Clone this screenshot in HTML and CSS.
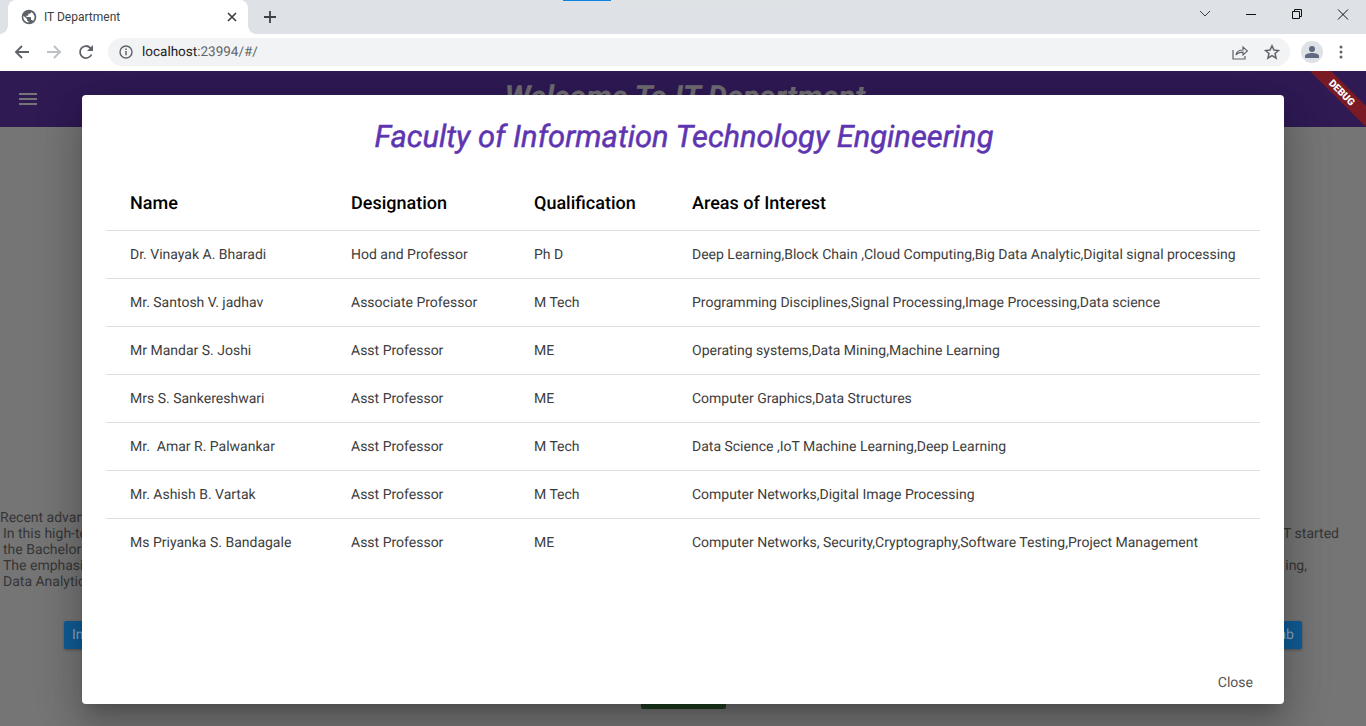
FILE: index.html
```html
<!DOCTYPE html>
<html lang="en">
<head>
    <meta charset="UTF-8">
    <title>IT Department</title>
    <link rel="stylesheet" href="styles.css">
</head>
<body>
    <div class="browser">
        <div class="tabstrip">
            <div class="tab">
                <svg class="tab-globe" width="16" height="16" viewBox="0 0 24 24"><path fill="#5f6368" d="M12 1a11 11 0 1 0 0 22 11 11 0 0 0 0-22zM11 20.500A8.500 8.500 0 0 1 3.700 10.200L9 15v1c0 1.100.9 2 2 2v2.500zm7-2.600c-.3-.8-1-1.400-1.900-1.400h-1.100v-3.500c0-.6-.4-1-1-1H8V10h2c.6 0 1-.4 1-1V7h2c1.100 0 2-.9 2-2v-.6a8.500 8.500 0 0 1 3 13.500z"/></svg>
                <span class="tab-title">IT Department</span>
                <svg class="tab-close" width="10" height="10" viewBox="0 0 10 10"><path d="M1 1l8 8M9 1l-8 8" stroke="#3c4043" stroke-width="1.700"/></svg>
            </div>
            <svg class="tab-new" width="14" height="14" viewBox="0 0 14 14"><path d="M7 1v12M1 7h12" stroke="#3c4043" stroke-width="1.800"/></svg>
            <div class="loading-bar"><span></span></div>
            <div class="win-controls">
                <svg width="46" height="30" viewBox="0 0 46 30"><path d="M18 11l5 5 5-5" fill="none" stroke="#3c4043" stroke-width="1"/></svg>
                <svg width="46" height="30" viewBox="0 0 46 30"><path d="M18 14.500h10" stroke="#111" stroke-width="1"/></svg>
                <svg width="46" height="30" viewBox="0 0 46 30"><path d="M18.500 11.500h7v7h-7zM20.500 11.500v-2h7v7h-2" fill="none" stroke="#111" stroke-width="1"/></svg>
                <svg width="46" height="30" viewBox="0 0 46 30"><path d="M18 9.500l10 10M28 9.500l-10 10" stroke="#111" stroke-width="1"/></svg>
            </div>
        </div>
        <div class="toolbar">
            <svg class="nav-icon" width="16" height="16" viewBox="0 0 16 16"><path d="M15 8H2M8 2L2 8l6 6" fill="none" stroke="#5f6368" stroke-width="1.900"/></svg>
            <svg class="nav-icon" width="16" height="16" viewBox="0 0 16 16"><path d="M1 8h13M8 2l6 6-6 6" fill="none" stroke="#bdc1c6" stroke-width="1.900"/></svg>
            <svg class="nav-icon" width="16" height="16" viewBox="0 0 16 16"><path d="M13.500 10.500A6 6 0 1 1 12.300 3.800L14 5.500" fill="none" stroke="#5f6368" stroke-width="1.800"/><path d="M15 1v6H9z" fill="#5f6368"/></svg>
            <div class="omnibox">
                <svg width="14" height="14" viewBox="0 0 14 14"><circle cx="7" cy="7" r="6" fill="none" stroke="#5f6368" stroke-width="1.400"/><path d="M7 6v4.200M7 3.600v1.400" stroke="#5f6368" stroke-width="1.500"/></svg>
                <span class="url"><b>localhost</b>:23994/#/</span>
                <svg class="omni-share" width="16" height="16" viewBox="0 0 16 16"><path d="M1 6v9h12v-3" fill="none" stroke="#5f6368" stroke-width="1.200"/><path d="M4 11c.5-3.500 3-5 7-5V3l4.500 4-4.500 4V8.200c-3 0-5.500.8-7 2.800z" fill="none" stroke="#5f6368" stroke-width="1.200"/></svg>
                <svg class="omni-star" width="16" height="16" viewBox="0 0 16 16"><path d="M8 1.800l1.900 4.300 4.600.4-3.500 3 1.100 4.600L8 11.700l-4.100 2.400L5 9.500l-3.500-3 4.600-.4z" fill="none" stroke="#5f6368" stroke-width="1.500"/></svg>
            </div>
            <div class="avatar">
                <svg width="14" height="12" viewBox="0 0 14 12"><circle cx="7" cy="3" r="3" fill="#5f6a80"/><path d="M0 12V10c0-2 3.500-3 7-3s7 1 7 3v2z" fill="#5f6a80"/></svg>
            </div>
            <svg class="menu-dots" width="4" height="14" viewBox="0 0 4 14"><circle cx="2" cy="2" r="1.500" fill="#5f6368"/><circle cx="2" cy="7" r="1.500" fill="#5f6368"/><circle cx="2" cy="12" r="1.500" fill="#5f6368"/></svg>
        </div>
    </div>

    <div class="app">
        <div class="appbar">
            <svg class="hamburger" width="18" height="12" viewBox="0 0 18 12"><path d="M0 1h18M0 6h18M0 11h18" stroke="#fff" stroke-width="2"/></svg>
            <h1 class="appbar-title">Welcome To IT Department</h1>
        </div>
        <div class="page">
            <div class="intro">
                <div class="intro-line"><span>Recent advances</span></div>
                <div class="intro-line indent"><span>In this high-tech</span><span class="end-a">T started</span></div>
                <div class="intro-line indent"><span>the Bachelor of</span></div>
                <div class="intro-line indent"><span>The emphasis</span><span class="end-b">ing,</span></div>
                <div class="intro-line indent"><span>Data Analytics</span></div>
            </div>
            <div class="page-buttons">
                <span class="lab-btn">Infrastructure</span>
                <span class="lab-btn">Lab</span>
            </div>
            <div class="green-row"><span class="green-btn"></span></div>
        </div>

        <div class="scrim"></div>

        <div class="dialog">
            <h2 class="dialog-title">Faculty of Information Technology Engineering</h2>
            <table class="faculty">
                <thead>
                    <tr><th class="c-name">Name</th><th class="c-desig">Designation</th><th class="c-qual">Qualification</th><th>Areas of Interest</th></tr>
                </thead>
                <tbody>
                    <tr><td>Dr. Vinayak A. Bharadi</td><td>Hod and Professor</td><td>Ph D</td><td>Deep Learning,Block Chain ,Cloud Computing,Big Data Analytic,Digital signal processing</td></tr>
                    <tr><td>Mr. Santosh V. jadhav</td><td>Associate Professor</td><td>M Tech</td><td>Programming Disciplines,Signal Processing,Image Processing,Data science</td></tr>
                    <tr><td>Mr Mandar S. Joshi</td><td>Asst Professor</td><td>ME</td><td>Operating systems,Data Mining,Machine Learning</td></tr>
                    <tr><td>Mrs S. Sankereshwari</td><td>Asst Professor</td><td>ME</td><td>Computer Graphics,Data Structures</td></tr>
                    <tr><td>Mr.&nbsp; Amar R. Palwankar</td><td>Asst Professor</td><td>M Tech</td><td>Data Science ,IoT Machine Learning,Deep Learning</td></tr>
                    <tr><td>Mr. Ashish B. Vartak</td><td>Asst Professor</td><td>M Tech</td><td>Computer Networks,Digital Image Processing</td></tr>
                    <tr><td>Ms Priyanka S. Bandagale</td><td>Asst Professor</td><td>ME</td><td>Computer Networks, Security,Cryptography,Software Testing,Project Management</td></tr>
                </tbody>
            </table>
            <div class="dialog-actions"><span class="close-btn">Close</span></div>
        </div>

        <div class="debug-corner"><div class="debug-ribbon">DEBUG</div></div>
    </div>
</body>
</html>
```

FILE: styles.css
```css
html, body {
    margin: 0;
    padding: 0;
    height: 100%;
    overflow: hidden;
}

body {
    font-family: 'Roboto', sans-serif;
    display: flex;
    flex-direction: column;
    background: #fff;
}

/* Browser chrome */
.browser {
    flex: none;
    height: 71px;
}

.tabstrip {
    position: relative;
    height: 34px;
    background: #dee1e6;
    display: flex;
    align-items: center;
}

.tab {
    position: relative;
    width: 240px;
    height: 34px;
    margin-left: 8px;
    background: #fff;
    border-radius: 8px 8px 0 0;
    display: flex;
    align-items: center;
    box-sizing: border-box;
    padding: 0 11px 0 13px;
}

.tab::before, .tab::after {
    content: "";
    position: absolute;
    bottom: 0;
    width: 8px;
    height: 8px;
}

.tab::before {
    left: -8px;
    background: radial-gradient(circle at 0 0, #dee1e6 7.500px, #fff 8px);
}

.tab::after {
    right: -8px;
    background: radial-gradient(circle at 100% 0, #dee1e6 7.500px, #fff 8px);
}

.tab-title {
    flex: 1;
    margin-left: 7px;
    font-size: 12px;
    color: #3c4043;
}

.tab-new {
    margin-left: 15px;
}

.loading-bar {
    position: absolute;
    top: 0;
    left: 563px;
    width: 240px;
    height: 1px;
    background: #e3e3e3;
}

.loading-bar span {
    display: block;
    width: 48px;
    height: 1px;
    background: #0a84e0;
}

.win-controls {
    margin-left: auto;
    align-self: flex-start;
    display: flex;
}

.win-controls svg {
    display: block;
}

.toolbar {
    height: 37px;
    background: #fff;
    display: flex;
    align-items: flex-start;
    box-sizing: border-box;
    padding-top: 4px;
}

.nav-icon {
    margin: 6px 8px 0 14px;
}

.nav-icon + .nav-icon {
    margin-left: 8px;
}

.omnibox {
    width: 1182px;
    height: 28px;
    margin-left: 6px;
    background: #f1f3f4;
    border-radius: 14px;
    display: flex;
    align-items: center;
    box-sizing: border-box;
    padding: 0 10px 0 11px;
}

.url {
    flex: 1;
    margin-left: 9px;
    font-size: 13.500px;
    color: #5f6368;
    text-rendering: geometricPrecision;
}

.url b {
    font-weight: 400;
    color: #202124;
}

.omni-share {
    margin-right: 16px;
}

.avatar {
    width: 22px;
    height: 22px;
    margin: 3px 0 0 11px;
    border-radius: 50%;
    background: #dee1e6;
    display: flex;
    align-items: center;
    justify-content: center;
}

.menu-dots {
    margin: 7px 0 0 16px;
}

/* Flutter app behind the dialog */
.app {
    position: relative;
    flex: 1;
    overflow: hidden;
    display: flex;
    flex-direction: column;
    text-rendering: geometricPrecision;
}

.appbar {
    flex: none;
    height: 56px;
    background: #673ab7;
    display: flex;
    align-items: center;
    justify-content: center;
    position: relative;
}

.hamburger {
    position: absolute;
    left: 19px;
    top: 22px;
}

.appbar-title {
    margin: 0 0 0 4px;
    font-size: 30.500px;
    font-weight: 700;
    font-style: italic;
    color: #fff;
    opacity: 0.9;
    transform: translateY(-2px);
}

.page {
    flex: 1;
    display: flex;
    flex-direction: column;
    background: #fff;
    padding-top: 383px;
}

.intro {
    font-size: 14px;
    line-height: 16px;
    color: #777;
}

.intro-line {
    display: flex;
    justify-content: space-between;
    height: 16px;
    white-space: nowrap;
}

.indent {
    padding-left: 3px;
}

.end-a {
    padding-right: 27px;
}

.end-b {
    padding-right: 59px;
}

.page-buttons {
    display: flex;
    justify-content: space-between;
    padding: 31px 64px 0;
}

.lab-btn {
    position: relative;
    z-index: 1;
    height: 28px;
    line-height: 29px;
    padding: 0 8px;
    background: #0f5c96;
    color: #8ba6bb;
    font-size: 14px;
    border-radius: 2px;
    box-shadow: 0 1px 3px rgba(0, 0, 0, 0.3);
}

.green-row {
    display: flex;
    justify-content: center;
    padding-top: 32px;
}

.green-btn {
    width: 85px;
    height: 28px;
    background: #458b46;
    border-radius: 2px;
}

.scrim {
    position: absolute;
    inset: 0;
    background: rgba(0, 0, 0, 0.54);
}

/* Dialog */
.dialog {
    position: absolute;
    z-index: 2;
    top: 24px;
    left: 82px;
    width: 1202px;
    height: 609px;
    background: #fff;
    border-radius: 4px;
    box-shadow: 0 11px 15px -7px rgba(0, 0, 0, 0.2), 0 24px 38px 3px rgba(0, 0, 0, 0.14), 0 9px 46px 8px rgba(0, 0, 0, 0.12);
    box-sizing: border-box;
    padding: 24px 24px 0;
    display: flex;
    flex-direction: column;
}

.dialog-title {
    margin: 0;
    padding-left: 2px;
    font-size: 30.900px;
    line-height: 36px;
    font-weight: 400;
    font-style: italic;
    color: #5e35b1;
    text-align: center;
    -webkit-text-stroke: 0.5px #5e35b1;
}

.faculty {
    margin-top: 20px;
    width: 1154px;
    border-collapse: collapse;
    table-layout: fixed;
    font-size: 14px;
    color: #3d3d3d;
}

.faculty th {
    height: 53px;
    padding: 2px 0 0;
    font-size: 18px;
    font-weight: 500;
    color: #000;
    text-align: left;
}

.faculty td {
    height: 47px;
    padding: 0;
}

.faculty tr {
    border-bottom: 1px solid #e0e0e0;
}

.faculty tbody tr:last-child {
    border-bottom: none;
}

.faculty th:first-child, .faculty td:first-child {
    padding-left: 24px;
}

.c-name {
    width: 221px;
}

.c-desig {
    width: 183px;
}

.c-qual {
    width: 158px;
}

.dialog-actions {
    margin-top: auto;
    display: flex;
    justify-content: flex-end;
    padding: 0 7px 13px 0;
}

.close-btn {
    font-size: 14px;
    line-height: 16px;
    color: #555;
}

/* Debug banner sits over the page */
.debug-corner {
    position: absolute;
    z-index: 3;
    top: 0;
    right: 0;
    width: 56px;
    height: 56px;
    overflow: hidden;
}

.debug-ribbon {
    position: absolute;
    top: 14px;
    left: -8px;
    width: 80px;
    height: 15px;
    line-height: 18px;
    background: #7a1a25;
    color: #fff;
    font-size: 10px;
    font-weight: 900;
    text-align: center;
    transform: rotate(45deg);
}
```
